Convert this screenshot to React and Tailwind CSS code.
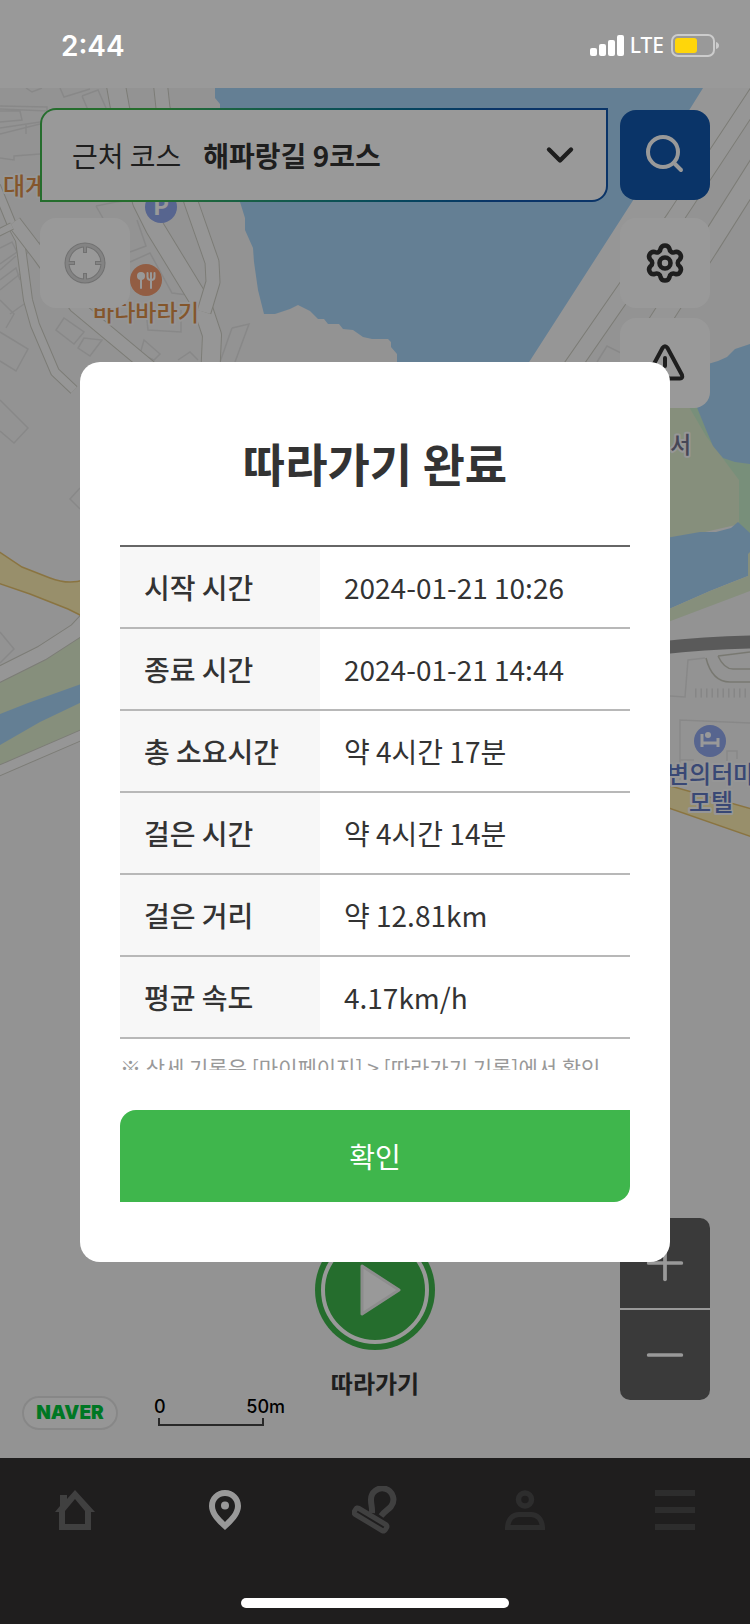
import { ChevronDown, Minus, Plus } from 'lucide-react'

const FONT = "font-['Noto_Sans_CJK_KR','Noto_Sans',sans-serif]"

const RECORDS = [
  { label: '시작 시간', value: '2024-01-21 10:26' },
  { label: '종료 시간', value: '2024-01-21 14:44' },
  { label: '총 소요시간', value: '약 4시간 17분' },
  { label: '걸은 시간', value: '약 4시간 14분' },
  { label: '걸은 거리', value: '약 12.81km' },
  { label: '평균 속도', value: '4.17km/h' },
]

const ROADS = [
  { d: 'M-4 186 L12 225 L20 240 L28 300 L35 325 L55 372 L74 390', w: 8 },
  { d: 'M115 80 L120 108 L142 202 L155 228 L202 305 L212 335 L210 380', w: 18 },
  { d: 'M160 80 L163 108 L191 202 L212 262 L213 282 L204 312', w: 13 },
  { d: 'M14 222 L40 256 L76 306 L160 376', w: 13 },
  { d: 'M-4 234 L12 226', w: 6 },
  { d: 'M762 86 L675 218 L560 384', w: 16 },
  { d: 'M764 158 L709 245 L640 352', w: 20 },
  { d: 'M-4 676 L42 653 L76 631 L90 616', w: 14 },
  { d: 'M-4 772 L84 734', w: 9 },
]

const BUILDINGS = [
  'M26 88 l6 4 l10 -4 M60 88 l4 9 l26 -8 M82 96 l16 -6 l8 18 M82 96 l6 14',
  'M0 106 l47 1 v4 l-47 -2 M0 128 l40 -6 M0 134 l40 -10 M26 124 v10 M0 111 l20 0 l2 9 l-22 2',
  'M0 158 l14 2 v-4 l26 -2',
  'M96 206 l20 -4 l18 -2 M96 206 l8 14 M137 220 l9 26 l-16 6',
  'M0 248 l12 -6 l5 10 l-17 12 M0 270 l16 -14 M0 280 l16 -12 l4 12',
  'M0 290 l20 -16 M0 300 l14 14 l-8 14 M10 314 l14 -10',
  'M40 242 l-16 14 M130 262 l20 -9 l22 40 l16 2 M146 310 l2 20 l33 2 v-22',
  'M64 318 l-8 12 l18 14 l10 -12 z M84 338 l-6 10 l12 8 l12 -16 z',
  'M0 332 l28 17 l-12 22 l-16 -10 M144 340 l16 14 l-6 6 l-14 -6 z',
  'M232 328 l17 -4 l-14 38 M232 328 l-12 34',
  'M178 360 l12 -8 l8 8 M0 400 l28 28 l-14 15 l-14 -12 M80 488 l-10 11 l10 10 M0 632 l14 17 l-14 14',
  'M597 362 l10 -16 l16 8 M670 696 l15 1 l3 -37 l17 -2 M680 780 v-60 l70 3 M680 760 h14 M727 761 v-10 h10 v8',
]

function Street({ d, w }) {
  return (
    <>
      <path d={d} fill="none" stroke="#cfcfc6" strokeWidth={w + 2} strokeLinejoin="round" />
      <path d={d} fill="none" stroke="#fbfbfa" strokeWidth={w} strokeLinejoin="round" />
    </>
  )
}

function MapLabel({ x, y, color, children, size = 24 }) {
  return (
    <text
      x={x}
      y={y}
      fontSize={size}
      fontWeight="500"
      fill={color}
      stroke="#fafafa"
      strokeWidth="4"
      strokeLinejoin="round"
      paintOrder="stroke"
    >
      {children}
    </text>
  )
}

function MapCanvas() {
  return (
    <svg
      className={`absolute inset-0 w-full h-full ${FONT}`}
      viewBox="0 88 750 1370"
      preserveAspectRatio="xMidYMin slice"
      aria-hidden="true"
    >
      <rect y="88" width="750" height="1370" fill="#f5f5f5" />
      <path d="M703 88 H750 L570 376 H515 Z" fill="#fbfbfb" />

      {/* Sea */}
      <path
        d="M215 88 V98 L220 104 V140 L240 202 L245 218 V230 L253 248 L254 262 L258 290 L264 314 L275 314 L290 309 L298 305 L310 311 L318 319 L324 319 L328 324 L339 324 L343 329 L353 330 L363 337 L372 339 H388 L391 342 V347 L397 354 V370 H524 L632 202 L703 88 Z"
        fill="#a7d4f7"
      />

      {/* Park, pond and river on the right */}
      <path d="M660 400 H700 L722 457 L740 480 V524 L670 540 H660 Z" fill="#dfeecf" />
      <path d="M685 400 L698 404 L722 457 L750 462 V536 L739 523 V480 L724 460 L706 436 Z" fill="#c8eecb" />
      <path d="M750 344 L735 349 L727 357 L718 361 L708 364 L690 390 L698 410 L707 432 L713 446 L723 458 L735 462 L750 464 Z" fill="#a7d4f7" />
      <path d="M660 539 L700 532 L716 532 L731 528 L738 522 L750 533 V553 L748 556 V576 L730 583 L710 591 L660 613 Z" fill="#a7d4f7" />
      <path d="M660 613 L710 591 L748 576 L748 554 L750 552 V591 L660 625 Z" fill="#dfeecf" />

      {/* Park and river on the left */}
      <path d="M0 681 L45 660 L84 634 V730 L0 766 Z" fill="#dfeecf" />
      <path d="M0 714 L28 703 L84 683 V701 L40 722 L0 745 Z" fill="#a7d4f7" />

      {BUILDINGS.map(d => (
        <path key={d} d={d} fill="none" stroke="#e3e3e3" strokeWidth="1.5" />
      ))}
      {ROADS.map(road => (
        <Street key={road.d} {...road} />
      ))}

      {/* Main roads */}
      <path d="M-2 551 L22 567 L50 578 Q68 585 84 580 V617 L68 609 L30 594 L-2 583 Z" fill="#fdeeb2" stroke="#e6c26d" strokeWidth="1.5" />
      <path d="M660 783 L752 809 V837 L660 805 Z" fill="#fdeeb2" stroke="#e6c26d" strokeWidth="1.5" />

      {/* Railway */}
      <path d="M660 648 Q705 643 752 642" fill="none" stroke="#979797" strokeWidth="13" />
      <path d="M706 658 Q712 682 730 682 H750 M718 656 Q724 669 733 669 H750 M718 656 L750 652" fill="none" stroke="#c9c9bd" strokeWidth="1.5" />
      <path d="M695 693 H750" stroke="#e0e0e0" strokeWidth="9" strokeDasharray="1.5 4" />

      {/* Places */}
      <circle cx="161" cy="207" r="16" fill="#91a8ef" />
      <text x="161" y="215" fontSize="24" fontWeight="700" fill="#fff" textAnchor="middle">P</text>
      <circle cx="146" cy="280" r="16" fill="#f39b70" />
      <circle cx="141" cy="276" r="4" fill="#fff" />
      <path d="M141 278 V288 M151 280 V288 M147.500 273 V277 Q147.500 280 151 280 Q154.500 280 154.500 277 V273 M151 273 V280" fill="none" stroke="#fff" strokeWidth="2" strokeLinecap="round" />
      <circle cx="710" cy="741" r="16" fill="#91a8ef" />
      <circle cx="708" cy="735" r="3" fill="#fff" />
      <path d="M702 734 V747 M718 738 V747 M702 743 H718" fill="none" stroke="#fff" strokeWidth="3" />

      <MapLabel x="3" y="195" color="#dd8f48">대게</MapLabel>
      <MapLabel x="93" y="321" color="#dd8f48" size={23}>바다바라기</MapLabel>
      <MapLabel x="670" y="453" color="#75758f" size={23}>서</MapLabel>
      <MapLabel x="667" y="783" color="#5f78c4">변의터마</MapLabel>
      <MapLabel x="689" y="811" color="#5f78c4">모텔</MapLabel>
    </svg>
  )
}

function StatusBar() {
  return (
    <div className="absolute inset-x-0 top-0 z-20 h-[88px] pt-[3px] pl-[61px] pr-[31px] flex items-center justify-between text-white">
      <span className="font-['Inter',sans-serif] text-[28px] font-semibold">2:44</span>
      <div className="flex items-center gap-[6px]">
        <svg width="34" height="22" viewBox="0 0 34 22" fill="currentColor" aria-hidden="true">
          <rect x="0" y="13" width="7" height="8" rx="2" />
          <rect x="9" y="9" width="7" height="12" rx="2" />
          <rect x="18" y="5" width="7" height="16" rx="2" />
          <rect x="27" y="0" width="7" height="21" rx="2" />
        </svg>
        <span className="font-['Noto_Sans',sans-serif] text-[21px] font-medium">LTE</span>
        <svg width="49" height="24" viewBox="0 0 49 24" aria-hidden="true">
          <rect x="2" y="1" width="42" height="21" rx="6" fill="none" stroke="#fff" strokeOpacity="0.5" strokeWidth="2" />
          <rect x="5" y="4" width="22" height="15" rx="3" fill="#ffd60a" />
          <path d="M46 8 Q49 9 49 11.500 Q49 14 46 15 Z" fill="#fff" fillOpacity="0.5" />
        </svg>
      </div>
    </div>
  )
}

function polar(r, deg) {
  const a = (deg * Math.PI) / 180
  return `${(20 + r * Math.cos(a)).toFixed(2)} ${(20 + r * Math.sin(a)).toFixed(2)}`
}

// Six rounded lobes joined by shallow inward arcs
const GEAR_PATH =
  `M${polar(15, -107)}` +
  [-90, -30, 30, 90, 150, 210]
    .map(t => `A4.6 4.6 0 0 1 ${polar(15, t + 17)}A4 4 0 0 0 ${polar(15, t + 43)}`)
    .join('') +
  'Z'

function GearIcon() {
  return (
    <svg width="40" height="40" viewBox="0 0 40 40" fill="none" stroke="currentColor" strokeWidth="4.6" strokeLinejoin="round" aria-hidden="true">
      <path d={GEAR_PATH} />
      <circle cx="20" cy="20" r="5.500" />
    </svg>
  )
}

function SquareButton({ label, children, disabled }) {
  return (
    <button
      type="button"
      aria-label={label}
      disabled={disabled}
      className="size-[90px] rounded-2xl bg-white text-[#333333] flex items-center justify-center"
    >
      {children}
    </button>
  )
}

function MapTop() {
  return (
    <div className="relative px-10 pt-5 flex flex-col gap-4">
      <div className="flex items-center gap-3">
        <div className="flex-1 p-[2px] rounded-tl-2xl rounded-br-2xl bg-linear-to-r from-[#3fb64c] from-20% to-[#1257ad] to-80%">
          <button
            type="button"
            aria-haspopup="listbox"
            className="w-full h-[90px] pl-[30px] pr-6 rounded-tl-[14px] rounded-br-[14px] bg-white text-[#333333] text-[28px] flex items-center"
          >
            <span>근처 코스</span>
            <span className="ml-[22px] font-bold">해파랑길 9코스</span>
            <ChevronDown className="ml-auto size-[44px]" strokeWidth={2.4} />
          </button>
        </div>
        <button
          type="button"
          aria-label="검색"
          className="size-[90px] rounded-2xl bg-[#1257ad] text-white flex items-center justify-center"
        >
          <svg width="40" height="40" viewBox="0 0 40 40" fill="none" stroke="currentColor" strokeWidth="4" strokeLinecap="round" aria-hidden="true">
            <circle cx="18" cy="17" r="15" />
            <path d="M29 28 L36 35" />
          </svg>
        </button>
      </div>

      <div className="flex items-start justify-between">
        <SquareButton label="현재 위치" disabled>
          <svg width="42" height="42" viewBox="0 0 42 42" fill="none" aria-hidden="true">
            <path d="M21 2 V11 M21 31 V40 M2 21 H11 M31 21 H40" stroke="#bdbdbd" strokeWidth="4" />
            <circle cx="21" cy="21" r="18" stroke="#bdbdbd" strokeWidth="5" />
            <circle cx="21" cy="21" r="18" stroke="#dadada" strokeWidth="3" />
            <path d="M21 2 V10 M21 32 V40 M2 21 H10 M32 21 H40" stroke="#dadada" strokeWidth="2" />
          </svg>
        </SquareButton>
        <div className="flex flex-col gap-[10px]">
          <SquareButton label="설정">
            <GearIcon />
          </SquareButton>
          <SquareButton label="신고">
            <svg width="42" height="40" viewBox="0 0 42 40" fill="none" stroke="currentColor" strokeWidth="4" strokeLinecap="round" strokeLinejoin="round" aria-hidden="true">
              <path d="M18.500 5 Q21 1.500 23.500 5 L38 32 Q39 35.500 36 35.500 H6 Q3 35.500 4 32 Z" />
              <path d="M21 15 V23 M21 29 V29.500" />
            </svg>
          </SquareButton>
        </div>
      </div>
    </div>
  )
}

function MapBottom() {
  return (
    <div className="relative grid grid-cols-[1fr_auto_1fr] items-end">
      <div className="pl-[22px] pb-7 flex items-end gap-9">
        <span className="w-[96px] h-[34px] rounded-full border-2 border-[#e2e2e2] bg-[#fbfbfb] flex items-center justify-center font-['Inter',sans-serif] text-[19px] font-black text-[#00c73c]">
          NAVER
        </span>
        <div className="w-[131px] pb-1">
          <div className="flex justify-between font-['Inter',sans-serif] text-[18px] leading-[22px] font-medium text-black">
            <span>0</span>
            <span>50m</span>
          </div>
          <div className="ml-1 w-[106px] h-2 border-x-2 border-b-2 border-[#444444]" />
        </div>
      </div>

      <button type="button" className="pb-14 flex flex-col items-center gap-[14px] text-[24px] leading-[38px] font-bold text-[#333333]">
        <svg width="120" height="120" viewBox="0 0 120 120" aria-hidden="true">
          <circle cx="60" cy="60" r="60" fill="#3fb64c" />
          <circle cx="60" cy="60" r="52" fill="none" stroke="#fff" strokeWidth="4" />
          <path d="M47 36 L84 60 L47 84 Z" fill="#fff" stroke="#ececec" strokeWidth="3" strokeLinejoin="round" />
        </svg>
        따라가기
      </button>

      <div className="pr-10 pb-[58px] flex justify-end">
        <div className="flex flex-col gap-[2px] rounded-[10px] overflow-hidden bg-white text-white">
          <button type="button" aria-label="확대" className="size-[90px] bg-[#626262] flex items-center justify-center">
            <Plus className="size-[56px]" strokeWidth={1.6} />
          </button>
          <button type="button" aria-label="축소" className="size-[90px] bg-[#626262] flex items-center justify-center">
            <Minus className="size-[56px]" strokeWidth={1.6} />
          </button>
        </div>
      </div>
    </div>
  )
}

function NavItem({ label, className, children }) {
  return (
    <a href="#" aria-label={label} className={`flex-1 h-10 flex items-center justify-center ${className}`}>
      {children}
    </a>
  )
}

function BottomNav() {
  return (
    <nav className="h-[166px] pt-8 bg-[#343233] flex items-start">
      <NavItem label="홈" className="text-[#6c6b6c]">
        <svg width="40" height="40" viewBox="0 0 40 40" fill="currentColor" fillRule="evenodd" aria-hidden="true">
          <path d="M20 0 L40 22 H36 V40 H4 V22 H0 L5 16 V5 H12 V9 Z M20 9 L10 21 V34 H30 V21 Z" />
        </svg>
      </NavItem>
      <NavItem label="지도" className="text-white">
        <svg width="32" height="40" viewBox="0 0 32 40" fill="currentColor" fillRule="evenodd" aria-hidden="true">
          <path d="M16 0 C7 0 0 7 0 16 C0 25 8 33 16 40 C24 33 32 25 32 16 C32 7 25 0 16 0 Z M16 6 C22 6 26 10.500 26 16 C26 22 21 27 16 32 C11 27 6 22 6 16 C6 10.500 10 6 16 6 Z" />
          <circle cx="16" cy="15.500" r="4" />
        </svg>
      </NavItem>
      <NavItem label="스탬프" className="text-[#6c6b6c]">
        <svg width="46" height="48" viewBox="0 0 46 48" className="shrink-0" fill="none" stroke="currentColor" aria-hidden="true">
          <path d="M20 27 C20.500 22 19 19 19 14 A11.200 11.200 0 1 1 39 20.500 C36.500 23.500 33 25 29 30" strokeWidth="6" />
          <rect x="0.5" y="30" width="36" height="7" rx="2" strokeWidth="5" transform="rotate(31 18.500 33.500)" />
        </svg>
      </NavItem>
      <NavItem label="마이페이지" className="text-[#4c4b4c]">
        <svg width="40" height="40" viewBox="0 0 40 40" fill="none" stroke="currentColor" aria-hidden="true">
          <circle cx="20" cy="9.500" r="6.500" strokeWidth="5.500" />
          <path d="M2.500 37.500 C3 29 8 24.500 14 24.500 H26 C32 24.500 37 29 37.500 37.500 Z" strokeWidth="5" />
        </svg>
      </NavItem>
      <NavItem label="메뉴" className="text-[#4c4b4c]">
        <svg width="40" height="40" viewBox="0 0 40 40" fill="currentColor" aria-hidden="true">
          <path d="M0 0 H40 V6 H0 Z M0 17 H40 V23 H0 Z M0 34 H40 V40 H0 Z" />
        </svg>
      </NavItem>
    </nav>
  )
}

function ResultDialog() {
  return (
    <div className="absolute inset-0 z-10 px-20 bg-black/40 flex items-center justify-center">
      <div
        role="dialog"
        aria-modal="true"
        aria-labelledby="result-title"
        className="w-full px-10 pt-[65px] pb-[60px] rounded-[20px] bg-white text-[#333333]"
      >
        <h1 id="result-title" className="mb-12 text-center text-[46px] leading-[70px] font-bold">
          따라가기 완료
        </h1>

        <div className="max-h-[525px] overflow-hidden">
          <table className="w-full border-t-2 border-[#666666] text-[28px] text-left">
            <tbody>
              {RECORDS.map(({ label, value }) => (
                <tr key={label} className="border-b-2 border-[#b8b8b8]">
                  <th scope="row" className="w-[200px] h-[82px] px-6 bg-[#f7f7f7] font-medium whitespace-nowrap">{label}</th>
                  <td className="px-6">{value}</td>
                </tr>
              ))}
            </tbody>
          </table>
          <p className="pt-[10px] text-[21px] leading-[36px] text-[#999999] whitespace-nowrap">
            ※ 상세 기록은 [마이페이지] &gt; [따라가기 기록]에서 확인
          </p>
        </div>

        <button type="button" className="mt-10 w-full h-[92px] rounded-tl-2xl rounded-br-2xl bg-[#3fb64c] text-[28px] text-white">
          확인
        </button>
      </div>
    </div>
  )
}

export default function App() {
  return (
    <div className={`relative min-h-screen flex flex-col bg-white ${FONT}`}>
      <StatusBar />
      <main className="relative mt-[88px] flex-1 flex flex-col justify-between overflow-hidden">
        <MapCanvas />
        <MapTop />
        <MapBottom />
      </main>
      <BottomNav />
      <ResultDialog />
      <div className="absolute inset-x-0 bottom-4 z-20 flex justify-center">
        <div className="w-[268px] h-[10px] rounded-full bg-white" />
      </div>
    </div>
  )
}
